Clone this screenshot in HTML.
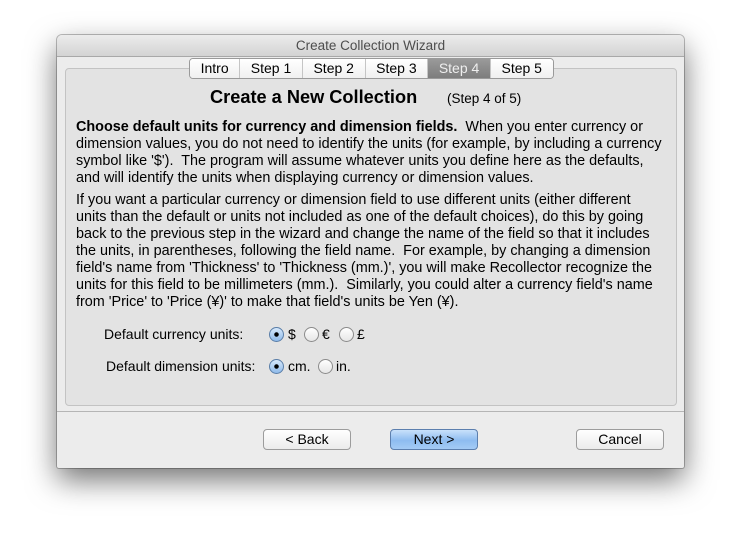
<!DOCTYPE html>
<html><head><meta charset="utf-8"><style>
body{margin:0;width:741px;height:549px;background:#fff;position:relative;overflow:hidden;font-family:"Liberation Sans",sans-serif;color:#000}
.win{position:absolute;left:57px;top:35px;width:627px;height:433px;background:#ececec;border-radius:5px 5px 2px 2px;box-shadow:0 12px 30px rgba(0,0,0,.55),0 0 0 1px rgba(0,0,0,.25)}
.title{position:absolute;left:0;top:0;width:627px;height:21px;background:linear-gradient(#ececec,#d3d3d3);border-bottom:1px solid #a8a8a8;border-radius:5px 5px 0 0;text-align:center;font-size:13.5px;line-height:22px;color:#4d4d4d}
.panel{position:absolute;left:8px;top:33px;width:610px;height:336px;background:#e3e3e3;border:1px solid #c3c3c3;border-radius:4px}
.tabs{position:absolute;left:189px;top:58px;height:19px;display:flex;border:1px solid #9a9a9a;border-radius:4px;background:#fff;overflow:hidden;font-size:14px;line-height:19px}
.tabs div{padding:0 10.6px;border-left:1px solid #c5c5c5;background:linear-gradient(#fff,#f0f0f0)}
.tabs div:first-child{border-left:none}
.tabs .sel{background:linear-gradient(#9a9a9a,#7d7d7d);color:#eee}
.t{position:absolute;white-space:nowrap;font-size:14.4px}
.h{position:absolute;left:210px;top:87px;font-size:18.2px;font-weight:bold}
.sub{position:absolute;left:447px;top:91px;font-size:13.5px}
.sep{position:absolute;left:57px;top:411px;width:627px;height:1px;background:#b5b5b5}
.btn{position:absolute;top:429px;height:19px;border:1px solid #9c9c9c;border-radius:4px;background:linear-gradient(#fff,#ececec);font-size:14px;line-height:19px;text-align:center}
.btn.def{background:linear-gradient(#c9e1fb,#8ebcf0 55%,#a4cbf5);border-color:#5c7fae}
.r{position:absolute;width:13px;height:13px;border:1px solid #8b8b8b;border-radius:50%;background:linear-gradient(#fff,#e6e6e6)}
.r.on{background:radial-gradient(circle,#000 0 2px,transparent 2.5px),linear-gradient(#d6e8fb,#8fbaea);border-color:#5a7ea8}
.l{font-size:14px}
</style></head><body>
<div class="win"><div class="title">Create Collection Wizard</div><div class="panel"></div></div>
<div class="tabs"><div>Intro</div><div>Step 1</div><div>Step 2</div><div>Step 3</div><div class="sel">Step 4</div><div>Step 5</div></div>
<div class="h">Create a New Collection</div><div class="sub">(Step 4 of 5)</div>
<div class="t" style="left:76px;top:119px"><b>Choose default units for currency and dimension fields.</b>&nbsp; When you enter currency or</div>
<div class="t" style="left:76px;top:136px">dimension values, you do not need to identify the units (for example, by including a currency</div>
<div class="t" style="left:76px;top:153px">symbol like '$').&nbsp; The program will assume whatever units you define here as the defaults,</div>
<div class="t" style="left:76px;top:170px">and will identify the units when displaying currency or dimension values.</div>
<div class="t" style="left:76px;top:192px">If you want a particular currency or dimension field to use different units (either different</div>
<div class="t" style="left:76px;top:209px">units than the default or units not included as one of the default choices), do this by going</div>
<div class="t" style="left:76px;top:226px">back to the previous step in the wizard and change the name of the field so that it includes</div>
<div class="t" style="left:76px;top:243px">the units, in parentheses, following the field name.&nbsp; For example, by changing a dimension</div>
<div class="t" style="left:76px;top:260px">field's name from 'Thickness' to 'Thickness (mm.)', you will make Recollector recognize the</div>
<div class="t" style="left:76px;top:277px">units for this field to be millimeters (mm.).&nbsp; Similarly, you could alter a currency field's name</div>
<div class="t" style="left:76px;top:294px">from 'Price' to 'Price (¥)' to make that field's units be Yen (¥).</div>
<div class="t l" style="left:104px;top:326px">Default currency units:</div>
<div class="r on" style="left:269px;top:327px"></div><div class="t l" style="left:288px;top:326px">$</div>
<div class="r" style="left:304px;top:327px"></div><div class="t l" style="left:322px;top:326px">€</div>
<div class="r" style="left:339px;top:327px"></div><div class="t l" style="left:357px;top:326px">£</div>
<div class="t l" style="left:106px;top:358px">Default dimension units:</div>
<div class="r on" style="left:269px;top:359px"></div><div class="t l" style="left:288px;top:358px">cm.</div>
<div class="r" style="left:318px;top:359px"></div><div class="t l" style="left:336px;top:358px">in.</div>
<div class="sep"></div>
<div class="btn" style="left:263px;width:86px">&lt; Back</div>
<div class="btn def" style="left:390px;width:86px">Next &gt;</div>
<div class="btn" style="left:576px;width:86px">Cancel</div>
</body></html>
